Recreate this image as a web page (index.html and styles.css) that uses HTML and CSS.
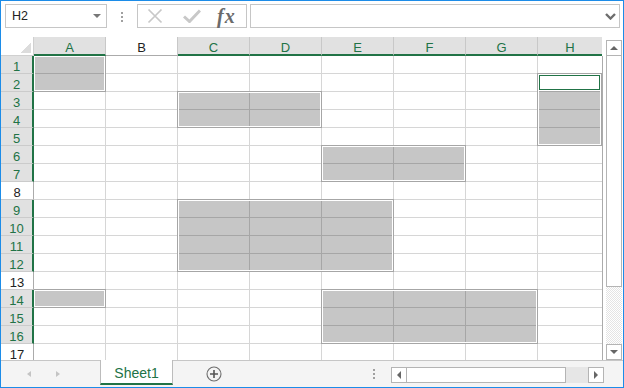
FILE: index.html
```html
<!DOCTYPE html>
<html lang="en">
<head>
  <meta charset="UTF-8">
  <title>Sheet1</title>
  <link rel="stylesheet" href="styles.css">
</head>
<body>

<div class="window">

  <div class="formula-bar">
    <div class="name-box"><span>H2</span><i class="caret"></i></div>
    <div class="grip"><i></i><i></i><i></i></div>
    <div class="fx-tools">
      <svg class="ico-cancel" width="16" height="16" viewBox="0 0 16 16">
        <path d="M1.5 1.5L14.5 14.5M14.5 1.5L1.5 14.5" stroke="#c8c8c8" stroke-width="1.7" fill="none"/>
      </svg>
      <svg class="ico-enter" width="18" height="14" viewBox="0 0 18 14">
        <path d="M1 7.5L6.5 12.5L17 1.5" stroke="#c8c8c8" stroke-width="3" fill="none"/>
      </svg>
      <span class="fx">fx</span>
    </div>
    <div class="formula-input">
      <svg width="11" height="7" viewBox="0 0 11 7">
        <path d="M1 1L5.5 5.5L10 1" stroke="#6d6d6d" stroke-width="2.4" fill="none"/>
      </svg>
    </div>
  </div>

  <div class="sheet">
    <div class="grid">
      <div class="col-heads">
        <div class="corner"></div>
        <div class="col-head sel">A</div>
        <div class="col-head">B</div>
        <div class="col-head sel">C</div>
        <div class="col-head sel">D</div>
        <div class="col-head sel">E</div>
        <div class="col-head sel">F</div>
        <div class="col-head sel">G</div>
        <div class="col-head sel last">H</div>
      </div>

      <div class="grid-body">
        <div class="row-heads">
          <div class="row-head sel">1</div>
          <div class="row-head sel">2</div>
          <div class="row-head sel">3</div>
          <div class="row-head sel">4</div>
          <div class="row-head sel">5</div>
          <div class="row-head sel">6</div>
          <div class="row-head sel">7</div>
          <div class="row-head">8</div>
          <div class="row-head sel">9</div>
          <div class="row-head sel">10</div>
          <div class="row-head sel">11</div>
          <div class="row-head sel">12</div>
          <div class="row-head">13</div>
          <div class="row-head sel">14</div>
          <div class="row-head sel">15</div>
          <div class="row-head sel">16</div>
          <div class="row-head">17</div>
        </div>

        <div class="cells">
          <div class="range r-a1"></div>
          <div class="range r-h2"><div class="active"></div></div>
          <div class="range r-c3"></div>
          <div class="range r-e6"></div>
          <div class="range r-c9"></div>
          <div class="range r-a14"></div>
          <div class="range r-e14"></div>
        </div>
      </div>
    </div>

    <div class="vscroll">
      <div class="vbar">
        <div class="sbtn up"></div>
        <div class="thumb"></div>
        <div class="track"></div>
        <div class="sbtn down"></div>
      </div>
    </div>
  </div>

  <div class="tab-bar">
    <div class="tab-nav"><i class="tri left"></i><i class="tri right"></i></div>
    <div class="tab">Sheet1</div>
    <div class="add-sheet">
      <svg width="16" height="16" viewBox="0 0 16 16">
        <circle cx="8" cy="8" r="7" stroke="#6e6e6e" stroke-width="1.1" fill="none"/>
        <path d="M4 8H12M8 4V12" stroke="#555" stroke-width="1.6"/>
      </svg>
    </div>
    <div class="grip grip-h"><i></i><i></i><i></i></div>
    <div class="hscroll">
      <div class="sbtn left"></div>
      <div class="hthumb"></div>
      <div class="htrack"></div>
      <div class="sbtn right"></div>
    </div>
  </div>

</div>

</body>
</html>
```

FILE: styles.css
```css
body {
  margin: 0;
  background: #fff;
}

.window {
  width: 624px;
  height: 388px;
  box-sizing: border-box;
  border: 1px solid #1c8ce8;
  background: #fff;
  display: flex;
  flex-direction: column;
  font-family: "Liberation Sans", Arial, sans-serif;
  color: #222;
}

/* formula bar */

.formula-bar {
  height: 36px;
  flex: none;
  display: flex;
  align-items: flex-start;
  padding: 3px 3px 0 4px;
  box-sizing: border-box;
}

.name-box {
  width: 102px;
  height: 24px;
  box-sizing: border-box;
  border: 1px solid #c6c6c6;
  display: flex;
  align-items: center;
  justify-content: space-between;
  padding: 0 5px 0 6px;
  font-size: 12.5px;
}

.caret {
  width: 0;
  height: 0;
  border-left: 4px solid transparent;
  border-right: 4px solid transparent;
  border-top: 4px solid #777;
}

.grip {
  display: flex;
  flex-direction: column;
  gap: 2px;
  margin: 8px 0 0 14px;
}

.grip i {
  width: 2px;
  height: 2px;
  background: #a0a0a0;
}

.fx-tools {
  width: 110px;
  height: 24px;
  margin-left: 14px;
  box-sizing: border-box;
  border: 1px solid #c6c6c6;
  display: flex;
  align-items: center;
  padding-left: 9px;
}

.ico-cancel {
  margin-right: 20px;
}

.ico-enter {
  margin-right: 16px;
}

.fx {
  font-family: "Liberation Serif", "Times New Roman", serif;
  font-style: italic;
  font-weight: bold;
  font-size: 20px;
  color: #6b6b6b;
  letter-spacing: 1px;
}

.formula-input {
  flex: 1;
  height: 24px;
  margin-left: 3px;
  box-sizing: border-box;
  border: 1px solid #c6c6c6;
  display: flex;
  align-items: center;
  justify-content: flex-end;
  padding-right: 3px;
}

/* sheet */

.sheet {
  height: 323px;
  flex: none;
  display: flex;
}

.grid {
  width: 602px;
  display: flex;
  flex-direction: column;
}

.col-heads {
  height: 19px;
  flex: none;
  display: flex;
}

.corner {
  width: 33px;
  flex: none;
  box-sizing: border-box;
  border-right: 1px solid #d0d0d0;
  border-bottom: 1px solid #d0d0d0;
  background: linear-gradient(135deg, transparent 50%, #dcdcdc 50%) no-repeat right 2px bottom 2px / 10px 10px;
}

.col-head {
  width: 72px;
  height: 19px;
  flex: none;
  box-sizing: border-box;
  border-right: 1px solid #c8c8c8;
  border-bottom: 1px solid #ababab;
  padding-top: 2px;
  font-size: 13px;
  line-height: 17px;
  text-align: center;
  background: #fff;
}

.col-head.sel {
  background: #e1e1e1;
  color: #217346;
  border-bottom: 2px solid #217346;
}

.col-head.last {
  width: 64px;
  border-right: 0;
}

.grid-body {
  flex: 1;
  min-height: 0;
  display: flex;
  overflow: hidden;
}

.row-heads {
  width: 33px;
  flex: none;
  position: relative;
  z-index: 1;
}

.row-head {
  height: 18px;
  box-sizing: border-box;
  border-bottom: 1px solid #cbcbcb;
  border-right: 1px solid #ababab;
  padding-top: 2px;
  font-size: 13px;
  line-height: 17px;
  text-align: center;
  background: #fff;
}

.row-head.sel {
  background: #e1e1e1;
  color: #217346;
  border-right: 2px solid #217346;
}

.cells {
  width: 569px;
  flex: none;
  box-sizing: border-box;
  border-right: 1px solid #ababab;
  display: grid;
  grid-template-columns: repeat(7, 72px) 64px;
  grid-template-rows: repeat(17, 18px);
  background-image:
    linear-gradient(to right, transparent 71px, #d6d6d6 71px),
    linear-gradient(to bottom, transparent 17px, #d6d6d6 17px);
  background-size: 72px 100%, 100% 18px;
}

/* selected ranges */

.range {
  margin: -1px 0 0 -1px;
  border: 1px solid #a6a6a6;
  background-color: #c6c6c6;
  background-image:
    linear-gradient(to right, transparent 71px, #a6a6a6 71px),
    linear-gradient(to bottom, transparent 17px, #a6a6a6 17px);
  background-size: 72px 100%, 100% 18px;
  box-shadow: inset 0 0 0 1px #fff;
}

.r-a1 { grid-column: 1 / 2; grid-row: 1 / 3; }
.r-h2 { grid-column: 8 / 9; grid-row: 2 / 6; }
.r-c3 { grid-column: 3 / 5; grid-row: 3 / 5; }
.r-e6 { grid-column: 5 / 7; grid-row: 6 / 8; }
.r-c9 { grid-column: 3 / 6; grid-row: 9 / 13; }
.r-a14 { grid-column: 1 / 2; grid-row: 14 / 15; }
.r-e14 { grid-column: 5 / 8; grid-row: 14 / 17; }

.active {
  height: 17px;
  background: #fff;
  box-shadow: inset 0 0 0 1px #fff, inset 0 0 0 2px #217346;
}

/* scroll bars */

.vscroll {
  width: 20px;
  flex: none;
  box-sizing: border-box;
  padding: 3px 1px 0 3px;
  display: flex;
}

.vbar {
  flex: 1;
  display: flex;
  flex-direction: column;
}

.sbtn {
  height: 16px;
  flex: none;
  box-sizing: border-box;
  border: 1px solid #b4b4b4;
  background: #fff;
  display: flex;
  align-items: center;
  justify-content: center;
}

.sbtn::before {
  content: "";
  border: 0 solid transparent;
}

.sbtn.up::before {
  border-width: 0 4px 4px;
  border-bottom-color: #666;
}

.sbtn.down::before {
  border-width: 4px 4px 0;
  border-top-color: #666;
}

.sbtn.left::before {
  border-width: 4px 4px 4px 0;
  border-right-color: #666;
}

.sbtn.right::before {
  border-width: 4px 0 4px 4px;
  border-left-color: #666;
}

.thumb {
  height: 232px;
  flex: none;
  margin-top: -1px;
  box-sizing: border-box;
  border: 1px solid #b4b4b4;
  background: #fff;
}

.track {
  flex: 1;
  background: repeating-conic-gradient(#e4e4e4 0 25%, #fff 0 50%) 0 0 / 2px 2px;
}

/* sheet tabs */

.tab-bar {
  flex: 1;
  display: flex;
  align-items: center;
  box-sizing: border-box;
  border-top: 1px solid #c6c6c6;
  background: #f4f4f4;
}

.tab-nav {
  width: 99px;
  flex: none;
  box-sizing: border-box;
  padding-left: 26px;
  display: flex;
  align-items: center;
  gap: 25px;
}

.tri {
  width: 0;
  height: 0;
  border: 0 solid transparent;
}

.tri.left {
  border-width: 3px 4px 3px 0;
  border-right-color: #c4c4c4;
}

.tri.right {
  border-width: 3px 0 3px 4px;
  border-left-color: #c4c4c4;
}

.tab {
  width: 73px;
  flex: none;
  align-self: stretch;
  margin: -1px 0 2px;
  box-sizing: border-box;
  border: 1px solid #bcbcbc;
  border-top: 0;
  border-bottom: 2px solid #217346;
  padding-top: 3px;
  background: #fff;
  display: flex;
  align-items: center;
  justify-content: center;
  font-size: 14px;
  color: #217346;
}

.add-sheet {
  width: 16px;
  height: 16px;
  margin-left: 33px;
}

.add-sheet svg {
  display: block;
}

.grip-h {
  margin: 0 16px 0 auto;
}

.hscroll {
  width: 213px;
  height: 16px;
  flex: none;
  margin: 2px 19px 0 0;
  display: flex;
}

.hscroll .sbtn {
  width: 16px;
  height: 16px;
}

.hthumb {
  width: 160px;
  flex: none;
  margin-left: -1px;
  box-sizing: border-box;
  border: 1px solid #b4b4b4;
  background: #fff;
}

.htrack {
  flex: 1;
  background: #e6e6e6;
}
```
